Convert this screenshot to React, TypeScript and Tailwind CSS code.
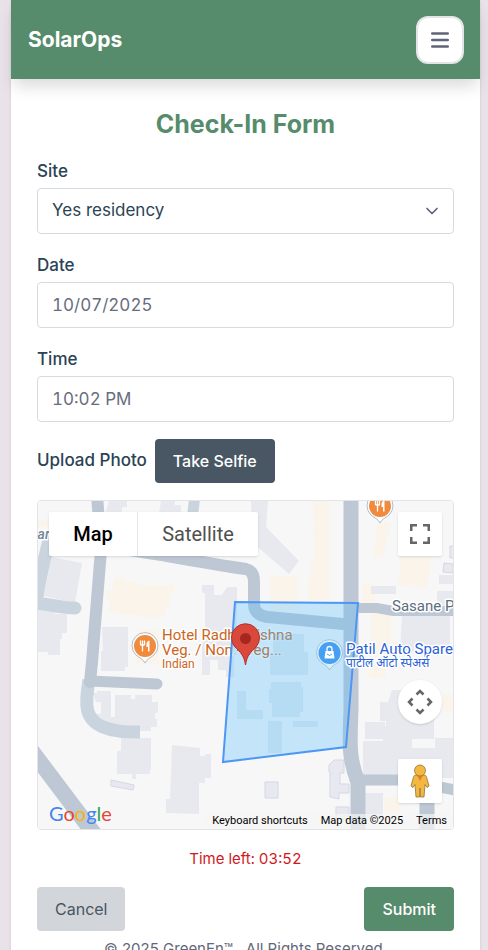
import { ChevronDown } from "lucide-react";
import type { ReactNode } from "react";

const inputClass =
  "h-[46px] w-full appearance-none rounded border border-[#d8dae2] bg-white px-3.5 text-[17px]";

function Field({
  id,
  label,
  children,
}: {
  id: string;
  label: string;
  children: ReactNode;
}) {
  return (
    <div>
      <label
        htmlFor={id}
        className="block text-[17px] leading-6 font-medium text-[#2a4355]"
      >
        {label}
      </label>
      <div className="relative mt-[5px]">{children}</div>
    </div>
  );
}

function FoodPin({ x, y }: { x: number; y: number }) {
  return (
    <g transform={`translate(${x} ${y})`}>
      <path
        d="M0 17C-2 13-5 12-9 9A13 13 0 1 1 9 9C5 12 2 13 0 17Z"
        fill="#fff"
        stroke="#aebccb"
        strokeWidth="1"
      />
      <circle r="11" fill="#f08a3c" />
      <path
        d="M-4.5-5.5V-1M-2.500-5.500V5.500M-.5-5.500V-1M-4.500-1H-.5"
        stroke="#fff"
        strokeWidth="1.300"
        fill="none"
      />
      <path d="M4.500 5.500H3V1H1.500V-2Q1.500-5 4.500-5.500Z" fill="#fff" />
    </g>
  );
}

function MapCanvas() {
  return (
    <svg
      viewBox="38 501 415 328"
      preserveAspectRatio="xMidYMid slice"
      className="h-full w-full"
      aria-hidden
    >
      <rect x="38" y="501" width="415" height="328" fill="#f7f7f7" />

      {/* Commercial plots */}
      <g fill="#faf4ea">
        <path d="M114 577h9v4h14v4h38v8h-5v13h-5v11h-27v-2h-19v-3h-10v-13h-3v-9h6z" />
        <path d="M137 629h22v35h-23z" />
        <path d="M313 501h16v99h-21v-22h3v-17h3zM270 576h27v34h-27z" />
        <path d="M377 523h14l-8 34h-9zM402 550h31l-7 39-28-4zM362 583h13v20h-13zM371 612h20v44h-20zM369 663h17v15h-17zM443 694h10v18h-10zM384 797h17v16h-17z" />
        <path d="M38 520h22v7h-22z" />
      </g>

      {/* Buildings */}
      <g fill="#e8e9ef">
        <path d="M51 557l31 6-7 40-31-7z" />
        <path d="M38 610h17v4h12v19h-5v6h-2v16h-12v-3h-10z" />
        <path d="M109 501h18v6h-5v5h-16zM161 501h14v4h6v8h-22z" />
        <path d="M202 585h12v10h8l5-8h10v68h-3v22h-8v-7h-8v-10h-8v15h-8v-38h3v-44h-3z" />
        <path d="M102 627h26v40h-3v4h-24v-20h2z" />
        <path d="M251 501h17l-2 26 33 34-10 13-37-32z" />
        <path d="M371 586h25v8h-25zM439 575h14v9h-14zM437 591h16v17h-16zM402 616h48v36h-50z" />
        <path d="M93 693h4v-2h14v26h4v-22h16v4h4v-4h17v7h6v11h-3v6h2v8h-6v4h-15v-4h-10v2h-14v-4h-10v-3h-7v-8h6v-12h-5z" />
        <path d="M121 735h9v3h21v32h-1v4h-14v5h-4v-5h-15v-23h4v-13z" />
        <path d="M172 745l28 3v8h5v-2h6v24h-6v5h-6v31l-33-1v-14h4z" />
        <path d="M365 722h20v17h-20zM392 690h42v49h-22v9h48v30h-97v-37h20v-15h3v-5h-6v-19h8z" />
        <path d="M363 793h20v26h-21zM435 738h18v28h-18z" />
      </g>
      <g fill="#e8e9f0" stroke="#d5d7e5">
        <path d="M111 780l23 5-1 5-22-4zM265 782h13v16h-13z" />
        <path d="M334 760h10v13h-4v11h9v9h-10v6l-9-2v-25h-1v-7zM336 807h13v12h-13z" />
        <path d="M444 563l9 1v9l-10-1zM450 546h4v12h-4z" />
      </g>

      {/* Roads */}
      <g fill="none" stroke="#bdc8d4" strokeLinecap="round">
        <path
          d="M89 680C85 704 84 719 103 727C115 732 126 732 140 732"
          strokeWidth="13"
          stroke="#c9d4df"
          strokeLinecap="butt"
        />
        <path
          d="M49 540C44 560 39 582 36 603C49 604 61 608 75 608"
          strokeWidth="13"
          stroke="#c9d4df"
        />
        <path d="M97 495L101 550L92 662L90 682" strokeWidth="12" />
        <path d="M195 495L192 520" strokeWidth="11" stroke="#cad4df" />
        <path d="M90 681L157 684" strokeWidth="11" />
        <path
          d="M120 549C157 553 195 562 246 569Q254 571 254 582V604Q254 615 268 617L343 624"
          strokeWidth="12"
        />
        <path d="M351 495V709C350 742 348 757 358 782V835" strokeWidth="15" />
        <path d="M350 608H377L393 611H455" strokeWidth="10" />
        <path d="M355 780H405L455 790" strokeWidth="11" />
        <path d="M427 790V835" strokeWidth="15" />
        <path d="M31 750L95 835" strokeWidth="16" />
      </g>

      <g
        fontFamily="Roboto, sans-serif"
        stroke="#fff"
        strokeWidth="3"
        paintOrder="stroke"
        strokeLinejoin="round"
      >
        <text x="29" y="539" fontSize="14" fontWeight="500" fill="#718797" fontStyle="italic">
          Bar
        </text>
        <text x="392" y="611" fontSize="15" fill="#596d7e">
          Sasane Pa
        </text>
        <g fill="#cc651b">
          <text x="162" y="640" fontSize="15">
            Hotel Radhakrishna
          </text>
          <text x="162" y="655" fontSize="15">
            Veg. / Non - Veg...
          </text>
          <text x="162" y="668" fontSize="12">
            Indian
          </text>
        </g>
      </g>

      <FoodPin x={145} y={646} />
      <FoodPin x={380} y={506} />

      {/* Site boundary */}
      <path
        d="M235 602L358 603L346 747L223 762Z"
        fill="#4ebcff"
        fillOpacity=".3"
        stroke="#4d96f5"
        strokeWidth="2"
      />
      <g fill="#7db8dc" fillOpacity=".2">
        <path d="M237 691h9v19h17v9h-26zM273 634h31v18h4v23h-38v-22h3zM271 682h30v5h2v25h-3v5h-28v-14h-3v-14h2zM268 721h14v32h-14zM293 721h25v6h-25z" />
      </g>

      <g
        fontFamily="Roboto, 'Noto Sans', sans-serif"
        fill="#2861d8"
        stroke="#fff"
        strokeWidth="3"
        paintOrder="stroke"
        strokeLinejoin="round"
      >
        <text x="346" y="654" fontSize="15">
          Patil Auto Spares
        </text>
        <text x="346" y="667" fontSize="12">
          पाटील ऑटो स्पेअर्स
        </text>
      </g>

      {/* Shop pin */}
      <g transform="translate(329.500 653)">
        <path
          d="M0 17C-2 13-5 12-9 9A13 13 0 1 1 9 9C5 12 2 13 0 17Z"
          fill="#d7eefb"
          stroke="#9fc4dd"
        />
        <circle r="11" fill="#459ff2" />
        <path d="M-4-2H4L5 5.500H-5Z" fill="#fff" />
        <path d="M-2.500-2V-4A2.500 2.500 0 0 1 2.500-4V-2" fill="none" stroke="#fff" strokeWidth="1.300" />
        <path d="M-2.500 1Q0 4 2.500 1" fill="none" stroke="#459ff2" />
      </g>

      {/* Current position */}
      <path
        d="M245.500 665C244 655 240 652 235 647A14 14 0 1 1 256 647C251 652 247 655 245.500 665Z"
        fill="#d9483b"
        stroke="#b52f28"
      />
      <circle cx="245.500" cy="638.500" r="5.500" fill="#a52720" />
    </svg>
  );
}

function SiteMap() {
  return (
    <section
      aria-label="Site map"
      className="relative mt-[17px] h-[330px] overflow-hidden rounded border border-[#e4e4e8] font-[Roboto,sans-serif]"
    >
      <MapCanvas />

      <div className="absolute top-[11px] left-[11px] flex h-11 rounded-xs bg-white text-xl shadow">
        <button type="button" className="w-[89px] border-r border-gray-200 font-medium text-black">
          Map
        </button>
        <button type="button" className="w-[120px] text-[#505050]">
          Satellite
        </button>
      </div>

      <button
        type="button"
        aria-label="Toggle fullscreen view"
        className="absolute top-[11px] right-[11px] grid size-11 place-items-center rounded-xs bg-white shadow"
      >
        <svg width="22" height="22" viewBox="0 0 22 22" fill="none" stroke="#666" strokeWidth="2.500">
          <path d="M2.250 8V2.250H8M14 2.250h5.750V8M19.750 14v5.750H14M8 19.750H2.250V14" />
        </svg>
      </button>

      <button
        type="button"
        aria-label="Map camera controls"
        className="absolute right-[11px] bottom-[105px] grid size-11 place-items-center rounded-full bg-white shadow"
      >
        <svg width="26" height="26" viewBox="0 0 26 26" fill="none" stroke="#666" strokeWidth="2.500">
          <path d="M9.500 5.500L13 2l3.500 3.500M9.500 20.500L13 24l3.500-3.500M5.500 9.500L2 13l3.500 3.500M20.500 9.500L24 13l-3.500 3.500" />
        </svg>
      </button>

      <button
        type="button"
        aria-label="Street View"
        className="absolute right-[11px] bottom-[26px] grid size-11 place-items-center rounded-xs bg-white shadow"
      >
        <svg width="20" height="34" viewBox="0 0 20 34" fill="#f3b83f" stroke="#967434" strokeWidth=".8">
          <path d="M6 11h8q2 0 2.500 2l2.500 9-2 1.500-2-3-1 12.500h-3.500L10 24l-.5 9H6L5 20.500l-2 3L1 22l2.500-9Q4 11 6 11Z" />
          <path d="M7 11.500h6L10 17Z" fill="#df8435" stroke="none" />
          <circle cx="10" cy="6.500" r="5.500" />
        </svg>
      </button>

      <div className="absolute bottom-1 left-[11px] font-[Lato,sans-serif] text-xl leading-6">
        <span className="text-[#4285f4]">G</span>
        <span className="text-[#ea4335]">o</span>
        <span className="text-[#f9b500]">o</span>
        <span className="text-[#4285f4]">g</span>
        <span className="text-[#34a853]">l</span>
        <span className="text-[#ea4335]">e</span>
      </div>

      <div className="absolute right-0 bottom-0 flex h-[15px] items-center gap-[13px] bg-[#f5f5f5]/70 px-1.5 text-[11px] text-black">
        <button type="button">Keyboard shortcuts</button>
        <span>Map data ©2025</span>
        <a href="#terms">Terms</a>
      </div>
    </section>
  );
}

export default function App() {
  return (
    <div className="h-screen overflow-hidden bg-[#e9e2e8] pr-2 pl-[11px] font-[Inter,sans-serif]">
      <div className="min-h-full bg-white shadow-sm">
        <header className="flex h-[79px] items-center justify-between bg-[#568c6b] pr-4 pl-[17px] shadow-[0_10px_15px_-3px_rgb(0_0_0/0.15)]">
          <div className="text-[21px] font-bold text-white">SolarOps</div>
          <button
            type="button"
            aria-label="Open menu"
            className="grid size-12 place-items-center rounded-xl border-2 border-[#e2e4e8] bg-white"
          >
            <svg width="18" height="18" viewBox="0 0 18 18" stroke="#5f6477" strokeWidth="2.400" strokeLinecap="round">
              <path d="M1.200 2.500h15.600M1.200 9h15.600M1.200 15.500h15.600" />
            </svg>
          </button>
        </header>

        <main className="px-[26px] pt-[29px]">
          <h1 className="text-center text-[25px] leading-8 font-bold text-[#568c6b]">
            Check-In Form
          </h1>

          <form className="mt-[19px]" onSubmit={(e) => e.preventDefault()}>
            <div className="flex flex-col gap-[19px]">
              <Field id="site" label="Site">
                <select id="site" className={`${inputClass} text-[#2a4355]`}>
                  <option>Yes residency</option>
                </select>
                <ChevronDown
                  size={20}
                  strokeWidth={2}
                  className="pointer-events-none absolute top-[13px] right-3 text-[#5c6375]"
                />
              </Field>
              <Field id="date" label="Date">
                <input id="date" readOnly value="10/07/2025" className={`${inputClass} text-[#686d7d] tabular-nums`} />
              </Field>
              <Field id="time" label="Time">
                <input id="time" readOnly value="10:02 PM" className={`${inputClass} text-[#686d7d] tabular-nums`} />
              </Field>
            </div>

            <div className="mt-[17px] flex items-center gap-2">
              <label htmlFor="selfie" className="text-[17px] font-medium text-[#2a4355]">
                Upload Photo
              </label>
              <button
                id="selfie"
                type="button"
                className="h-11 rounded bg-[#485763] px-[18px] text-base font-medium text-white"
              >
                Take Selfie
              </button>
            </div>

            <SiteMap />

            <p className="mt-[17px] text-center text-[15px] leading-6 text-[#d0191e] tabular-nums">
              Time left: 03:52
            </p>

            <div className="mt-4 flex justify-between">
              <button type="button" className="h-11 rounded bg-[#d2d5da] px-[18px] text-base text-[#485763]">
                Cancel
              </button>
              <button type="submit" className="h-11 rounded bg-[#568c6b] px-[18px] text-base font-medium text-white">
                Submit
              </button>
            </div>
          </form>
        </main>

        <footer className="mt-2 text-center text-[15px] leading-5 text-[#626879]">
          © 2025 GreenEn™ . All Rights Reserved.
        </footer>
      </div>
    </div>
  );
}
